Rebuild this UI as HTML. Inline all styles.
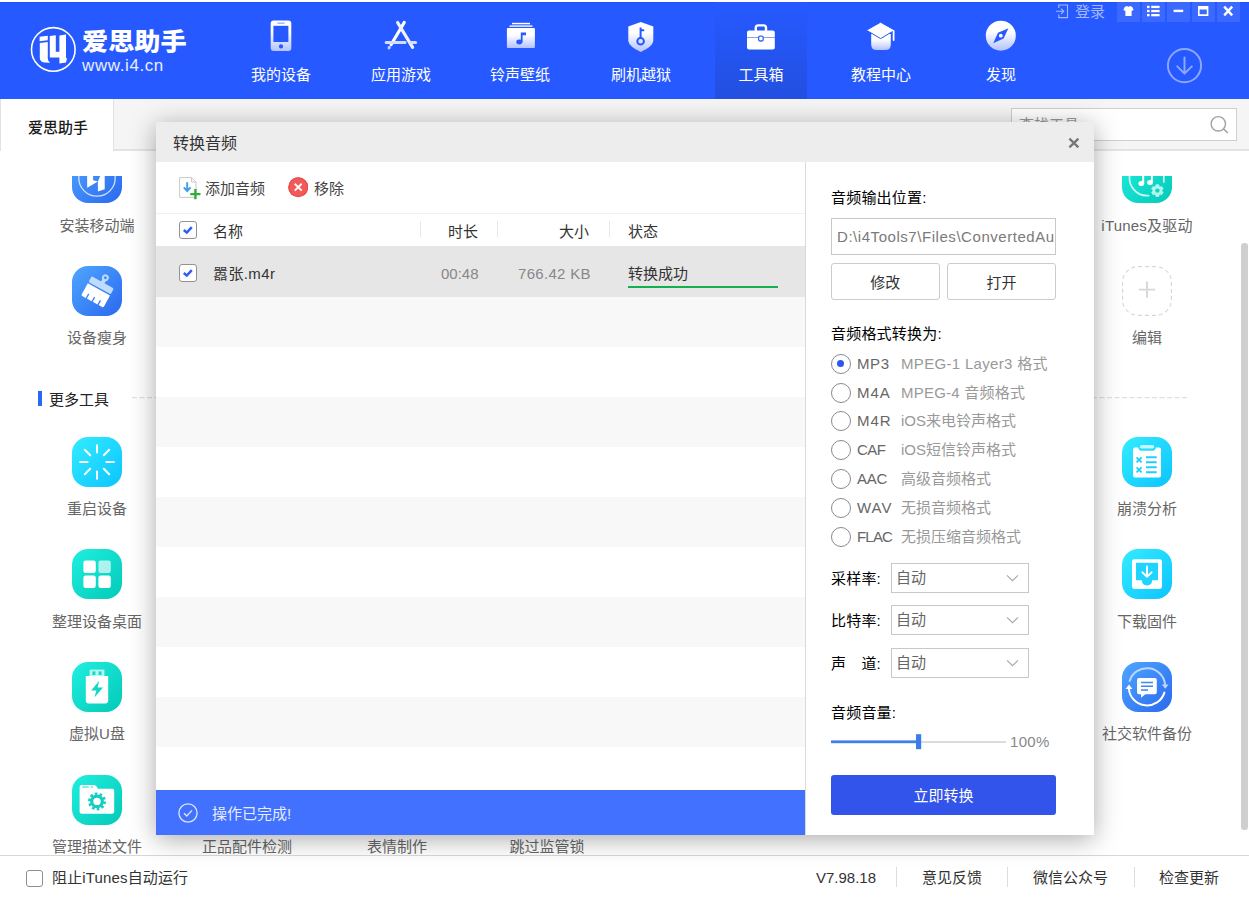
<!DOCTYPE html>
<html lang="zh-CN">
<head>
<meta charset="utf-8">
<title>爱思助手</title>
<style>
*{box-sizing:border-box;margin:0;padding:0}
html,body{width:1249px;height:899px;overflow:hidden;background:#fff}
body{font-family:"Liberation Sans","Noto Sans CJK SC",sans-serif;font-size:15px;color:#333;position:relative}
.a{position:absolute}
.t{position:absolute;white-space:nowrap;line-height:20px;height:20px;font-size:15px}
/* header */
#hdr{left:0;top:2px;width:1249px;height:97.3px;background:#2659ff}
#navsel{left:715px;top:2px;width:92px;height:97px;background:linear-gradient(#2659ff 5%,#2350e2 95%)}
.nl{position:absolute;top:65px;width:120px;text-align:center;color:#fff;font-size:15px;line-height:20px;height:20px;white-space:nowrap}
.wb{position:absolute;top:2px;width:23px;height:20px;background:#3b69ff}
#hsvg{left:0;top:0;width:1249px;height:99px}
/* tab bar */
#tabbar{left:0;top:99px;width:1249px;height:52px;background:#f5f5f5;border-bottom:2px solid #e4e4e4}
#tab1{left:0;top:99px;width:114px;height:52px;background:#fff;border-right:1px solid #e2e2e2;border-left:1px solid #e2e2e2}
#search{left:1011px;top:108px;width:226px;height:32.6px;border:1px solid #cfcfcf;background:#fff}
/* content */
.ico{position:absolute;width:50px;height:50px;border-radius:16px;overflow:hidden}
.ico svg{position:absolute;left:0;top:0;width:50px;height:50px}
.bl{background:linear-gradient(135deg,#4fa6ff,#2a68ef)}
.cy{background:linear-gradient(135deg,#33ecff,#0cc4ff)}
.tl{background:linear-gradient(135deg,#20efdf,#04c9b8)}
.il{position:absolute;width:160px;text-align:center;font-size:15px;color:#666;line-height:20px;height:20px;white-space:nowrap}
#clip{left:0;top:151px;width:1249px;height:704px;overflow:hidden}
#clip2{left:0;top:24.6px;width:1249px;height:679.4px;overflow:hidden}
/* dialog */
#dlg{left:155px;top:122px;width:939px;height:713px}
#dlgbg{left:0.5px;top:0.3px;width:938.2px;height:712.8px;background:#fff;box-shadow:0 4px 24px rgba(0,0,0,.34)}
#dlgt{left:0.5px;top:0.3px;width:938.2px;height:40px;background:#ededed}
.row{position:absolute;left:0.5px;width:649.8px;height:50px}
.g{background:#f8f8f8}
.cb{position:absolute;width:18px;height:18px;border:1.4px solid #929292;border-radius:3px;background:#fff}
.cb svg{position:absolute;left:0;top:0;width:16px;height:16px}
.btn{position:absolute;height:37px;border:1px solid #ccc;border-radius:3px;background:#fff;text-align:center;line-height:37px;font-size:15px;color:#333}
.rad{position:absolute;left:676px;width:20px;height:20px;border:1.5px solid #8a8a8a;border-radius:50%;background:#fff}
.rl{position:absolute;left:702px;font-size:15px;color:#666;line-height:20px;height:20px;white-space:nowrap}
.rd{position:absolute;left:746px;font-size:15px;color:#999;line-height:20px;height:20px;white-space:nowrap}
.sel2{position:absolute;left:736px;width:138px;height:30px;border:1px solid #c8c8c8;background:#fff;font-size:15px;line-height:28px;padding-left:4px;color:#666}
.sel2 svg{position:absolute;right:9px;top:9px;width:13px;height:10px}
.sl{position:absolute;left:676px;font-size:15px;color:#000;font-weight:400;letter-spacing:0.2px;line-height:20px;height:20px;white-space:nowrap}
/* footer */
#ftr{left:0;top:855px;width:1249px;height:44px;background:#fff;border-top:1px solid #d8d8d8}
.ft{position:absolute;top:868px;font-size:15px;line-height:20px;height:20px;color:#333;white-space:nowrap}
.sep{position:absolute;top:867px;width:1px;height:20px;background:#ddd}
</style>
</head>
<body>
<!-- HEADER -->
<div id="hdr" class="a"></div>
<div class="a" style="left:0;top:2px;width:1249px;height:1px;background:#1f52fb"></div>
<div id="navsel" class="a"></div>
<div class="wb" style="left:1117px"></div>
<div class="wb" style="left:1142px"></div>
<div class="wb" style="left:1167px"></div>
<div class="wb" style="left:1192px"></div>
<div class="wb" style="left:1217px"></div>
<svg id="hsvg" class="a" viewBox="0 0 1249 99">
<defs>
<linearGradient id="wg" x1="0" y1="0" x2="0" y2="1"><stop offset="0" stop-color="#fff"/><stop offset="0.35" stop-color="#fff"/><stop offset="1" stop-color="#b3c2ff"/></linearGradient>
</defs>
<!-- logo -->
<circle cx="53.3" cy="49.4" r="21.8" fill="none" stroke="#fff" stroke-width="1.6"/>
<g fill="#fff">
<path d="M39.6 36.8 L47.8 35.7 V40.2 L39.6 41.3 Z"/>
<path d="M39.8 43 L47.8 41.9 V58.6 Q47.8 61.6 50.2 62.8 L44.2 62.4 Q39.8 62 39.8 57.8 Z"/>
<path d="M49.8 35.9 L55.8 35.2 V51.8 H59.4 V35.4 L66 34.6 V57.8 L67 58.4 L66 62.6 L59.4 63.4 V57.6 H49.8 Z"/>
</g>
<!-- phone -->
<rect x="270.7" y="20.5" width="20.6" height="30.6" rx="3" fill="url(#wg)"/>
<rect x="273.4" y="25.8" width="15" height="16.2" fill="#2659ff"/>
<circle cx="281" cy="46.4" r="2.1" fill="#2659ff"/>
<rect x="277.2" y="22.4" width="7.6" height="1.4" rx="0.7" fill="#8ea6ff"/>
<!-- appstore -->
<g fill="none" stroke-linecap="round">
<path d="M404.2 22.5 L391.2 44.5" stroke="#fff" stroke-width="3.2"/>
<path d="M397.6 22.5 L412.6 47.3" stroke="#f0f3ff" stroke-width="3.2"/>
<path d="M386.2 42.4 L405 42.4" stroke="#d5ddff" stroke-width="3"/>
<path d="M410.5 42.4 L415.6 42.4" stroke="#d5ddff" stroke-width="3"/>
<path d="M389.4 47.2 L389 47.9" stroke="#c3ceff" stroke-width="3"/>
</g>
<!-- music -->
<rect x="506.9" y="28" width="28" height="20" rx="1" fill="url(#wg)"/>
<rect x="509.5" y="25.4" width="23" height="1.4" fill="#fff"/>
<rect x="512" y="22.8" width="18" height="1.5" fill="#fff"/>
<g fill="#2659ff"><ellipse cx="519.3" cy="42" rx="3" ry="2.4"/><path d="M520.8 32.6 h5.2 v2.6 h-3.4 v7 h-1.8z"/></g>
<!-- shield -->
<path d="M640.8 22 L653.3 26.6 L653.3 41 Q652.6 46.5 640.8 52 Q629 46.5 628.3 41 L628.3 26.6 Z" fill="url(#wg)"/>
<g fill="none" stroke="#2659ff" stroke-width="2"><circle cx="640.6" cy="41.2" r="3.3"/><path d="M640.6 38 V27.6 M640.6 30.2 h3.6"/></g>
<!-- toolbox -->
<path d="M755.8 31 v-3.2 q0 -2.4 2.4 -2.4 h5.4 q2.4 0 2.4 2.4 v3.2" fill="none" stroke="#fff" stroke-width="2.4"/>
<path d="M749 30.4 h23.8 q2 0 2 2 v4.9 h-27.8 v-4.9 q0 -2 2 -2z" fill="#fff"/>
<path d="M747 37.8 h27.8 v9.8 q0 2 -2 2 h-23.8 q-2 0 -2 -2z" fill="#fff"/>
<rect x="758.6" y="36.2" width="4.6" height="4.8" rx="1.4" fill="#fff" stroke="#3c64ea" stroke-width="1.3"/>
<!-- cap -->
<path d="M871.2 34 h19.6 v10.5 q0 5.5 -5.5 5.5 h-8.6 q-5.5 0 -5.5 -5.5z" fill="url(#wg)"/>
<path d="M866.4 30.2 L880.6 22.2 L894.8 30.2 L880.6 38.6 Z" fill="#fff" stroke="#2659ff" stroke-width="1"/>
<path d="M893.6 31 V40" stroke="#fff" stroke-width="1.8" stroke-linecap="round"/>
<!-- compass -->
<circle cx="1000.8" cy="35.7" r="15" fill="url(#wg)"/>
<path d="M1008.4 28.2 L1003.6 38.6 L993.2 43.2 L998 32.8 Z" fill="#2659ff"/>
<circle cx="1000.8" cy="35.7" r="1.9" fill="#fff"/>
<!-- login -->
<g fill="none" stroke="#a6b9ff" stroke-width="1.1">
<path d="M1058.8 8 V5 H1067.5 V17.6 H1058.8 V14.6"/>
<path d="M1056 11.3 H1063.6 M1061 8.6 L1063.8 11.3 L1061 14"/>
</g>
<!-- window buttons -->
<path d="M1124.7 6.9 l2.2 -1 q1.6 1.5 3.2 0 l2.2 1 l1.3 3 l-2 1 l0 5 h-6.2 l0 -5 l-2 -1z" fill="#fff"/>
<g fill="#fff"><rect x="1147" y="5.8" width="2.6" height="2.3"/><rect x="1151.2" y="5.8" width="8.4" height="2.3"/><rect x="1147" y="9.9" width="2.6" height="2.3"/><rect x="1151.2" y="9.9" width="8.4" height="2.3"/><rect x="1147" y="14" width="2.6" height="2.3"/><rect x="1151.2" y="14" width="8.4" height="2.3"/></g>
<rect x="1173.6" y="9.7" width="9.6" height="2.4" fill="#fff"/>
<path d="M1198 6 h10.4 v9.9 h-10.4z M1199.6 9.4 v4.9 h7.2 v-4.9z" fill="#fff" fill-rule="evenodd"/>
<path d="M1224.2 6.6 L1232.2 15.4 M1232.2 6.6 L1224.2 15.4" stroke="#fff" stroke-width="2.4" fill="none"/>
<!-- download -->
<circle cx="1184.5" cy="65.6" r="16.6" fill="none" stroke="#8ea7ff" stroke-width="2"/>
<path d="M1184.5 57.5 V73 M1177.2 66.4 L1184.5 73.6 L1191.8 66.4" fill="none" stroke="#8ea7ff" stroke-width="2" stroke-linecap="round" stroke-linejoin="round"/>
</svg>
<div class="t" style="left:81.5px;top:26.6px;height:30px;line-height:30px;font-size:24px;font-weight:900;color:#fff;transform:scaleX(1.09);transform-origin:0 0">爱思助手</div>
<div class="t" style="left:82px;top:56px;font-size:17px;color:#e9eeff;letter-spacing:0.6px">www.i4.cn</div>
<div class="nl" style="left:221px">我的设备</div>
<div class="nl" style="left:341px">应用游戏</div>
<div class="nl" style="left:460px">铃声壁纸</div>
<div class="nl" style="left:581px">刷机越狱</div>
<div class="nl" style="left:701px">工具箱</div>
<div class="nl" style="left:821px">教程中心</div>
<div class="nl" style="left:941px">发现</div>
<div class="t" style="left:1075px;top:2px;color:#a6b9ff;font-size:15px">登录</div>
<!-- TAB BAR -->
<div id="tabbar" class="a"></div>
<div id="tab1" class="a"></div>
<div class="t" style="left:28px;top:118.4px;color:#1a1a1a;font-weight:500">爱思助手</div>
<div id="search" class="a"><div class="t" style="left:7px;top:6px;color:#999">查找工具</div>
<svg class="a" style="left:196px;top:5px;width:24px;height:24px" viewBox="0 0 24 24"><circle cx="10.3" cy="9.8" r="7.2" fill="none" stroke="#a2a2a2" stroke-width="1.4"/><path d="M15.4 14.9 L19.9 19" stroke="#a2a2a2" stroke-width="1.6" fill="none"/></svg>
</div>
<!-- CONTENT (background tool grid) -->
<div id="clip" class="a"><div id="clip2" class="a"><div class="a" style="left:0;top:-175.6px;width:1249px;height:900px">
<!-- left column -->
<div class="ico bl" style="left:72px;top:153px"><svg viewBox="0 0 50 50"><circle cx="25" cy="25" r="18.2" fill="none" stroke="#cfe4ff" stroke-width="1.3"/><path d="M15 8 H21.1 V27.2 L25.9 28.6 L15.2 34.8 Z" fill="#fff"/><path d="M28.4 8 H32.7 V36.2 L25.9 38.6 V28.6 L28.4 22.4 Z" fill="#fff"/></svg></div>
<div class="il" style="left:17px;top:216px">安装移动端</div>
<div class="ico bl" style="left:72px;top:265.7px"><svg viewBox="0 0 50 50"><g transform="translate(29 19.6) rotate(29)"><circle cx="0" cy="-9" r="2.4" fill="none" stroke="#bfdcff" stroke-width="2"/><rect x="-1.9" y="-7" width="3.8" height="4" fill="#bfdcff"/><rect x="-12.7" y="-3.8" width="25.4" height="6.8" rx="1.6" fill="#bfdcff"/><path d="M-12.7 4.3 H12.7 V16.8 q0 1.4 -1.4 1.4 H7.4 V13.2 H6 V18.2 H0.7 V13.2 H-0.7 V18.2 H-6 V13.2 H-7.4 V18.2 H-11.3 q-1.4 0 -1.4 -1.4 Z" fill="#fff"/></g></svg></div>
<div class="il" style="left:17px;top:328px">设备瘦身</div>
<div class="a" style="left:38px;top:390.6px;width:4px;height:15px;background:#2a6af2"></div>
<div class="t" style="left:49px;top:390px;color:#222">更多工具</div>
<svg class="a" style="left:132px;top:395px;width:1056px;height:5px" viewBox="0 0 1056 5"><path d="M0 2.6 H1055" stroke="#e0e0e0" stroke-width="1.1" stroke-dasharray="5 2.5" fill="none"/></svg>
<div class="ico cy" style="left:72px;top:436.9px"><svg viewBox="0 0 50 50"><g stroke="#fff" stroke-width="2" stroke-linecap="round" fill="none"><path d="M25 8.2 V15.6 M25 34.4 V41.8 M8.2 25 H15.6 M34.4 25 H41.8 M12.8 12.8 L18.2 18.2 M31.8 31.8 L37.2 37.2 M37.2 12.8 L31.8 18.2 M18.2 31.8 L12.8 37.2"/></g></svg></div>
<div class="il" style="left:17px;top:499px">重启设备</div>
<div class="ico tl" style="left:72px;top:549.1px"><svg viewBox="0 0 50 50"><rect x="11.4" y="11.6" width="12.4" height="12.4" rx="2.2" fill="#fff"/><rect x="26.4" y="11.6" width="12.4" height="12.4" rx="2.2" fill="#fff" fill-opacity="0.65"/><rect x="11.4" y="26.6" width="12.4" height="12.4" rx="2.2" fill="#fff"/><rect x="26.4" y="26.6" width="12.4" height="12.4" rx="2.2" fill="#fff"/></svg></div>
<div class="il" style="left:17px;top:612.1px">整理设备桌面</div>
<div class="ico tl" style="left:72px;top:661.8px"><svg viewBox="0 0 50 50"><rect x="17.6" y="7.6" width="14.8" height="7" fill="#b7f5ee"/><rect x="20.4" y="9.4" width="3" height="3.6" fill="#1ad8c8"/><rect x="26.6" y="9.4" width="3" height="3.6" fill="#1ad8c8"/><path d="M13.8 14 H36.2 V38.6 q0 2.8 -2.8 2.8 H16.6 q-2.8 0 -2.8 -2.8 Z" fill="#fff"/><path d="M27.2 18.8 L19.2 28.4 H24.4 L22.4 35.4 L31 25.6 H25.6 Z" fill="#12d6c6"/></svg></div>
<div class="il" style="left:17px;top:724px">虚拟U盘</div>
<div class="ico tl" style="left:72px;top:774.5px"><svg viewBox="0 0 50 50"><path d="M7.6 12 q0 -2 2 -2 h12.4 q1.6 0 2.6 1.6 l1.4 2.2 h14.2 q2 0 2 2 v21 q0 2 -2 2 h-30.6 q-2 0 -2 -2z" fill="#fff"/><path d="M10.2 12 h6.6 M18.8 12 h2" stroke="#1ad8c8" stroke-width="1" fill="none"/><circle cx="25" cy="26.4" r="7.4" fill="none" stroke="#12cfc0" stroke-width="3.2" stroke-dasharray="2.5 2.15"/><circle cx="25" cy="26.4" r="5.3" fill="none" stroke="#12cfc0" stroke-width="3.2"/></svg></div>
<div class="il" style="left:17px;top:836.8px">管理描述文件</div>
<div class="il" style="left:167px;top:836.8px">正品配件检测</div>
<div class="il" style="left:317px;top:836.8px">表情制作</div>
<div class="il" style="left:467px;top:836.8px">跳过监管锁</div>
<!-- right column -->
<div class="ico tl" style="left:1122px;top:153px"><svg viewBox="0 0 50 50"><path d="M8.3 20 A17.6 17.6 0 0 0 26.6 42.6" fill="none" stroke="#c9faf5" stroke-width="1.7" stroke-linecap="round"/><path d="M41.8 12 V29" stroke="#c9faf5" stroke-width="1.7" stroke-linecap="round"/><g fill="#fff"><ellipse cx="19.3" cy="30.6" rx="2.9" ry="2.5"/><rect x="20.2" y="16" width="2" height="14.6"/><ellipse cx="28" cy="29.4" rx="2.9" ry="2.5"/><rect x="28.9" y="14" width="2" height="15.4"/><path d="M20.2 16 L30.9 13.6 V17 L20.2 19.4z"/></g><path d="M33.95 31.78 L36.85 31.78 L37.09 33.43 L38.17 34.05 L39.72 33.43 L41.17 35.95 L39.86 36.97 L39.86 38.23 L41.17 39.25 L39.72 41.77 L38.17 41.15 L37.09 41.77 L36.85 43.42 L33.95 43.42 L33.71 41.77 L32.63 41.15 L31.08 41.77 L29.63 39.25 L30.94 38.23 L30.94 36.97 L29.63 35.95 L31.08 33.43 L32.63 34.05 L33.71 33.43 Z" fill="#b4f5ee" stroke="#b4f5ee" stroke-width="0.8" stroke-linejoin="round"/><circle cx="35.4" cy="37.6" r="2.2" fill="#10d4c4"/></svg></div>
<div class="il" style="left:1067px;top:216px;letter-spacing:0.2px">iTunes及驱动</div>
<svg class="a" style="left:1122px;top:265.8px;width:50px;height:50px" viewBox="0 0 50 50"><rect x="0.6" y="0.6" width="48.8" height="48.8" rx="15.5" fill="none" stroke="#d6d6d6" stroke-width="1.1" stroke-dasharray="4 3"/><path d="M25 15.4 V31.8 M16.8 23.6 H33.2" stroke="#d8d8d8" stroke-width="1.9" fill="none"/></svg>
<div class="il" style="left:1067px;top:328px">编辑</div>
<div class="ico cy" style="left:1122px;top:436.9px"><svg viewBox="0 0 50 50"><path d="M13 10.4 h3.2 q0.6 3.4 3.4 3.4 h10.8 q2.8 0 3.4 -3.4 h3.2 q2 0 2 2 v26 q0 2 -2 2 h-24 q-2 0 -2 -2 v-26 q0 -2 2 -2z" fill="#fff"/><rect x="17.8" y="8" width="14.4" height="3.6" rx="1.8" fill="#c6f6ff"/><g stroke="#1ccfff" stroke-width="2" fill="none"><path d="M24 20.3 H34.7 M24 25.3 H34.7 M24 30.2 H34.7 M24 35.2 H34.7"/></g><g stroke="#1ccfff" stroke-width="1.8" fill="none"><path d="M14.6 20.3 l5 5 M19.6 20.3 l-5 5 M14.6 30.3 l5 5 M19.6 30.3 l-5 5"/></g></svg></div>
<div class="il" style="left:1067px;top:499px">崩溃分析</div>
<div class="ico cy" style="left:1122px;top:549.1px"><svg viewBox="0 0 50 50"><rect x="10" y="10.2" width="30" height="29.8" rx="2.4" fill="#fff"/><path d="M14 13.8 H36 V31.2 H30.2 Q29.8 36.4 25 36.4 Q20.2 36.4 19.8 31.2 H14 Z" fill="#1fd4ff"/><path d="M25 17.4 V27.6 M20.4 23.4 L25 27.8 L29.6 23.4" stroke="#fff" stroke-width="2" fill="none" stroke-linecap="round" stroke-linejoin="round"/></svg></div>
<div class="il" style="left:1067px;top:612.1px">下载固件</div>
<div class="ico bl" style="left:1122px;top:661.8px"><svg viewBox="0 0 50 50"><path d="M7.6 19 A18.2 18.2 0 0 1 43.1 22.6" fill="none" stroke="#b8d6ff" stroke-width="2" stroke-linecap="round"/><path d="M39.8 22.4 h6.8 l-3.4 4.4z" fill="#b8d6ff"/><path d="M42.4 30.6 A18.2 18.2 0 0 1 6.9 27" fill="none" stroke="#fff" stroke-width="2" stroke-linecap="round"/><path d="M3.6 27 h6.8 l-3.4 -4.4z" fill="#fff"/><path d="M17 16 h15.8 q2 0 2 2 v12.2 q0 2 -2 2 h-9.4 l-4.4 3.6 v-3.6 h-2 q-2 0 -2 -2 v-12.2 q0 -2 2 -2z" fill="#fff"/><path d="M19 20.5 H31 M19 24.2 H31 M19 28 H26" stroke="#3c86f6" stroke-width="1.5" fill="none"/></svg></div>
<div class="il" style="left:1067px;top:724px">社交软件备份</div>
</div></div></div>
<!-- scrollbar -->
<div class="a" style="left:1241.2px;top:243px;width:6.6px;height:586.5px;background:#cfcfcf;border-radius:3.3px"></div>
<!-- FOOTER -->
<div id="ftr" class="a"></div>
<div class="a" style="left:26px;top:869.5px;width:17px;height:17px;border:1.3px solid #8e8e8e;border-radius:3px;background:#fff"></div>
<div class="ft" style="left:52px;letter-spacing:0.15px">阻止iTunes自动运行</div>
<div class="ft" style="left:816px">V7.98.18</div>
<div class="sep" style="left:896px"></div>
<div class="ft" style="left:922px">意见反馈</div>
<div class="sep" style="left:1007px"></div>
<div class="ft" style="left:1033px">微信公众号</div>
<div class="sep" style="left:1134px"></div>
<div class="ft" style="left:1159px">检查更新</div>
<!-- DIALOG -->
<div id="dlg" class="a">
<div id="dlgbg" class="a"></div>
<div id="dlgt" class="a"></div>
<div class="t" style="left:18px;top:12px;font-size:16px;color:#333">转换音频</div>
<svg class="a" style="left:913px;top:15px;width:12px;height:12px" viewBox="0 0 12 12"><path d="M1.4 1.6 L10.4 10.4 M10.4 1.6 L1.4 10.4" stroke="#777" stroke-width="2.3" fill="none"/></svg>
<!-- toolbar -->
<svg class="a" style="left:23px;top:54px;width:24px;height:24px" viewBox="0 0 24 24"><path d="M1.6 1.6 H13.6 L18 6 V21.4 H1.6 Z" fill="#fff" stroke="#c9c9c9" stroke-width="1"/><path d="M13.6 1.6 V6 H18" fill="none" stroke="#c9c9c9" stroke-width="1"/><path d="M9.2 6.2 V14.6 M5.8 11.4 L9.2 15 L12.6 11.4" stroke="#3d9bf0" stroke-width="1.9" fill="none"/><path d="M17.4 13 V23.2 M12.3 18.1 H22.5" stroke="#2fae3c" stroke-width="2.4" fill="none"/></svg>
<div class="t" style="left:50px;top:56.5px;color:#444">添加音频</div>
<svg class="a" style="left:133px;top:55.2px;width:20.4px;height:20.4px" viewBox="0 0 20 20"><circle cx="10" cy="10" r="9.8" fill="#f25a5a"/><circle cx="10" cy="10" r="9.2" fill="none" stroke="#e84a4a" stroke-width="1"/><path d="M6.6 6.6 L13.4 13.4 M13.4 6.6 L6.6 13.4" stroke="#fff" stroke-width="1.8" fill="none"/></svg>
<div class="t" style="left:159px;top:56.5px;color:#444">移除</div>
<div class="a" style="left:0.5px;top:91px;width:650px;height:1px;background:#f0f0f0"></div>
<!-- table header -->
<div class="cb" style="left:24px;top:99px"><svg viewBox="0 0 16 16"><path d="M3.8 8 L6.8 10.6 L11.8 5.2" stroke="#2f5bff" stroke-width="2.5" fill="none"/></svg></div>
<div class="t" style="left:58px;top:100px;color:#333">名称</div>
<div class="a" style="left:265px;top:99px;width:1px;height:16px;background:#e6e6e6"></div>
<div class="t" style="left:293px;top:100px;color:#333">时长</div>
<div class="a" style="left:342px;top:99px;width:1px;height:16px;background:#e6e6e6"></div>
<div class="t" style="left:404px;top:100px;color:#333">大小</div>
<div class="a" style="left:454px;top:99px;width:1px;height:16px;background:#e6e6e6"></div>
<div class="t" style="left:473px;top:100px;color:#333">状态</div>
<!-- rows -->
<div class="row" style="top:124.3px;height:50.8px;background:#e6e6e6"></div>
<div class="row g" style="top:175.3px"></div>
<div class="row g" style="top:275.3px"></div>
<div class="row g" style="top:375.3px"></div>
<div class="row g" style="top:475.3px"></div>
<div class="row g" style="top:575.3px"></div>
<div class="cb" style="left:24px;top:141.5px"><svg viewBox="0 0 16 16"><path d="M3.8 8 L6.8 10.6 L11.8 5.2" stroke="#2f5bff" stroke-width="2.5" fill="none"/></svg></div>
<div class="t" style="left:58px;top:142px;color:#333;letter-spacing:0.4px">嚣张.m4r</div>
<div class="t" style="left:286px;top:142px;color:#888">00:48</div>
<div class="t" style="left:363px;top:142px;color:#888;letter-spacing:0.3px">766.42 KB</div>
<div class="t" style="left:473px;top:142px;color:#333">转换成功</div>
<div class="a" style="left:473px;top:164px;width:150px;height:2px;background:#12b04f"></div>
<!-- status bar -->
<div class="a" style="left:0.5px;top:668.2px;width:649.8px;height:44.9px;background:#4270ff"></div>
<svg class="a" style="left:23px;top:681px;width:20px;height:20px" viewBox="0 0 20 20"><circle cx="10" cy="10" r="9.1" fill="none" stroke="#dfe6ff" stroke-width="1.3"/><path d="M6 10.2 L8.8 13 L14 7.4" stroke="#dfe6ff" stroke-width="1.3" fill="none"/></svg>
<div class="t" style="left:57px;top:682px;color:#e6ecff">操作已完成!</div>
<!-- divider -->
<div class="a" style="left:650px;top:40px;width:1.4px;height:673px;background:#dadada"></div>
<!-- right pane -->
<div class="sl" style="top:65.5px">音频输出位置:</div>
<div class="a" style="left:676px;top:96px;width:225px;height:37px;border:1px solid #c8c8c8;background:#fff;overflow:hidden"><div class="t" style="left:5px;top:8px;color:#7a7a7a;letter-spacing:0.55px">D:\i4Tools7\Files\ConvertedAudio</div></div>
<div class="btn" style="left:676px;top:141.3px;width:108.5px">修改</div>
<div class="btn" style="left:792.2px;top:141.3px;width:108.7px">打开</div>
<div class="sl" style="top:201.5px">音频格式转换为:</div>
<div class="rad" style="top:231.7px"><div class="a" style="left:5px;top:5px;width:7px;height:7px;border-radius:50%;background:#2f55f2"></div></div>
<div class="rl" style="top:231.7px;letter-spacing:0.6px">MP3</div><div class="rd" style="top:231.7px;letter-spacing:0.32px">MPEG-1 Layer3 格式</div>
<div class="rad" style="top:260.5px"></div>
<div class="rl" style="top:260.5px;letter-spacing:1px">M4A</div><div class="rd" style="top:260.5px;letter-spacing:0.23px">MPEG-4 音频格式</div>
<div class="rad" style="top:289.3px"></div>
<div class="rl" style="top:289.3px;letter-spacing:0.9px">M4R</div><div class="rd" style="top:289.3px">iOS来电铃声格式</div>
<div class="rad" style="top:318.1px"></div>
<div class="rl" style="top:318.1px;letter-spacing:-0.6px">CAF</div><div class="rd" style="top:318.1px">iOS短信铃声格式</div>
<div class="rad" style="top:346.6px"></div>
<div class="rl" style="top:346.6px;letter-spacing:-0.3px">AAC</div><div class="rd" style="top:346.6px">高级音频格式</div>
<div class="rad" style="top:375.7px"></div>
<div class="rl" style="top:375.7px;letter-spacing:1px">WAV</div><div class="rd" style="top:375.7px">无损音频格式</div>
<div class="rad" style="top:404.5px"></div>
<div class="rl" style="top:404.5px;letter-spacing:-0.8px">FLAC</div><div class="rd" style="top:404.5px">无损压缩音频格式</div>
<div class="sl" style="top:446.5px">采样率:</div>
<div class="sel2" style="top:441px">自动<svg viewBox="0 0 13 10"><path d="M1 2.4 L6.5 7.6 L12 2.4" stroke="#aaa" stroke-width="1.2" fill="none"/></svg></div>
<div class="sl" style="top:488.5px">比特率:</div>
<div class="sel2" style="top:483px">自动<svg viewBox="0 0 13 10"><path d="M1 2.4 L6.5 7.6 L12 2.4" stroke="#aaa" stroke-width="1.2" fill="none"/></svg></div>
<div class="sl" style="top:531.5px">声　道:</div>
<div class="sel2" style="top:526px">自动<svg viewBox="0 0 13 10"><path d="M1 2.4 L6.5 7.6 L12 2.4" stroke="#aaa" stroke-width="1.2" fill="none"/></svg></div>
<div class="sl" style="top:581px">音频音量:</div>
<div class="a" style="left:676px;top:619px;width:175px;height:2px;background:#dcdcdc"></div>
<svg class="a" style="left:676px;top:610px;width:180px;height:20px" viewBox="0 0 180 20"><rect x="0" y="8.4" width="88" height="2.8" fill="#3e80ea"/><rect x="85" y="2.2" width="5.2" height="15" fill="#3c7ce8"/></svg>

<div class="t" style="left:855px;top:610px;color:#888;letter-spacing:0.3px">100%</div>
<div class="a" style="left:676px;top:653px;width:225px;height:40px;background:#3354ea;border-radius:3px;color:#fff;text-align:center;line-height:41px;font-size:15px">立即转换</div>
</div>
</body>
</html>
